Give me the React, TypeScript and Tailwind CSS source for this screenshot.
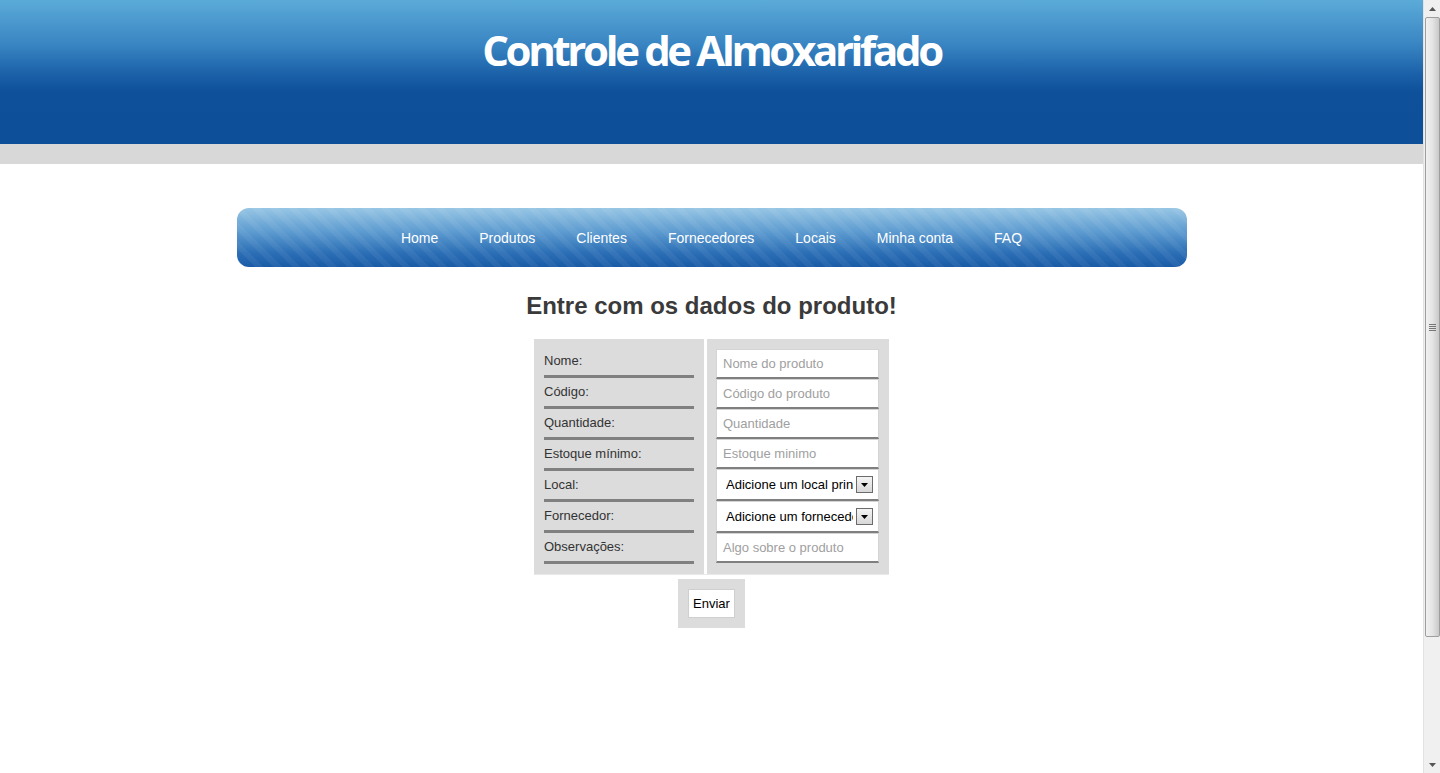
const fields = [
  { label: 'Nome:', placeholder: 'Nome do produto' },
  { label: 'Código:', placeholder: 'Código do produto' },
  { label: 'Quantidade:', placeholder: 'Quantidade' },
  { label: 'Estoque mínimo:', placeholder: 'Estoque minimo' },
  { label: 'Local:', select: 'Adicione um local principal' },
  { label: 'Fornecedor:', select: 'Adicione um fornecedor' },
  { label: 'Observações:', placeholder: 'Algo sobre o produto' },
];

const navLinks = ['Home', 'Produtos', 'Clientes', 'Fornecedores', 'Locais', 'Minha conta', 'FAQ'];

const SelectBox = ({ text }: { text: string }) => (
  <div className="flex h-[32px] items-center border border-[#d4d4d4] border-b-[2px] border-b-[#7f7f7f] bg-white pl-[9px] pr-[5px]">
    <span className="flex-1 overflow-hidden whitespace-nowrap text-[13px] text-black">{text}</span>
    <span className="ml-[3px] flex h-[17px] w-[17px] shrink-0 items-center justify-center border border-[#6b6b6b] bg-[linear-gradient(to_bottom,#f4f4f4,#d8d8d8)]">
      <svg width="7" height="4" viewBox="0 0 7 4">
        <path d="M0 0h7L3.5 4z" fill="#000" />
      </svg>
    </span>
  </div>
);

const Scrollbar = () => (
  <div className="flex h-full w-[17px] shrink-0 flex-col items-center bg-[#f0f0f0] border-l border-[#e2e2e2]">
    <div className="flex h-[17px] w-full items-center justify-center">
      <svg width="7" height="4" viewBox="0 0 7 4">
        <path d="M0 4h7L3.5 0z" fill="#555" />
      </svg>
    </div>
    <div className="flex h-[620px] w-[15px] items-center justify-center rounded-[2px] border border-[#9e9e9e] bg-[linear-gradient(to_right,#f2f2f2,#e4e4e4_50%,#c9c9c9)]">
      <div className="flex flex-col gap-[1px]">
        <div className="h-[1px] w-[7px] bg-[#777]" />
        <div className="h-[1px] w-[7px] bg-[#777]" />
        <div className="h-[1px] w-[7px] bg-[#777]" />
        <div className="h-[1px] w-[7px] bg-[#777]" />
      </div>
    </div>
    <div className="flex-1" />
    <div className="flex h-[17px] w-full items-center justify-center">
      <svg width="7" height="4" viewBox="0 0 7 4">
        <path d="M0 0h7L3.5 4z" fill="#555" />
      </svg>
    </div>
  </div>
);

export default function App() {
  return (
    <div className="flex h-[773px] w-full overflow-hidden bg-white font-['Liberation_Sans',Arial,sans-serif]">
      <div className="flex-1 overflow-hidden">
        <header>
          <div className="flex h-[144px] justify-center bg-[linear-gradient(to_bottom,#5babd9_0%,#3a86c3_30%,#1a60a8_52%,#0e509a_64%,#0d4f98_100%)] pt-[23px]">
            <h1 className="font-['Open_Sans',sans-serif] text-[42px] leading-[54px] font-bold tracking-[-0.08em] text-white">
              Controle de Almoxarifado
            </h1>
          </div>
          <div className="h-[20px] bg-[#d8d8d8]" />
        </header>

        <nav className="mx-auto mt-[44px] flex h-[59px] w-[950px] items-center justify-center rounded-[12px] bg-[repeating-linear-gradient(45deg,rgba(255,255,255,0.05)_0px,rgba(255,255,255,0.05)_6px,transparent_6px,transparent_13px),linear-gradient(to_bottom,#98c6e4,#5d9bd0_40%,#2d70b6_75%,#1a5ba7)]">
          {navLinks.map((link) => (
            <a key={link} href="#" className="px-[20.5px] pt-[2px] text-[14px] text-white">
              {link}
            </a>
          ))}
        </nav>

        <h2 className="mt-[24px] text-center text-[24px] leading-[30px] font-bold text-[#3a3a3a]">
          Entre com os dados do produto!
        </h2>

        <div className="mt-[18px] flex justify-center">
          <div className="flex border-b border-[#e9e9e9]">
            <div className="w-[170px] bg-[#dcdcdc] px-[10px] pt-[8px] pb-[10px]">
              {fields.map((f) => (
                <div
                  key={f.label}
                  className="flex h-[31px] items-center border-b-[3px] border-[#808080] pb-[1px] text-[13px] text-[#333]"
                >
                  {f.label}
                </div>
              ))}
            </div>
            <div className="w-[3px] bg-white" />
            <div className="w-[182px] bg-[#dcdcdc] pt-[10px] pr-[10px] pb-[11px] pl-[9px]">
              {fields.map((f) =>
                f.select ? (
                  <SelectBox key={f.label} text={f.select} />
                ) : (
                  <div
                    key={f.label}
                    className="flex h-[30px] items-center border border-[#d4d4d4] border-b-[2px] border-b-[#7f7f7f] bg-white px-[6px] text-[13px] text-[#a0a0a0]"
                  >
                    {f.placeholder}
                  </div>
                )
              )}
            </div>
          </div>
        </div>

        <div className="mt-[4px] flex justify-center">
          <div className="bg-[#dcdcdc] px-[10px] py-[10px]">
            <button className="h-[29px] w-[47px] border border-[#cfcfcf] bg-white text-[13px] text-black">
              Enviar
            </button>
          </div>
        </div>
      </div>
      <Scrollbar />
    </div>
  );
}
